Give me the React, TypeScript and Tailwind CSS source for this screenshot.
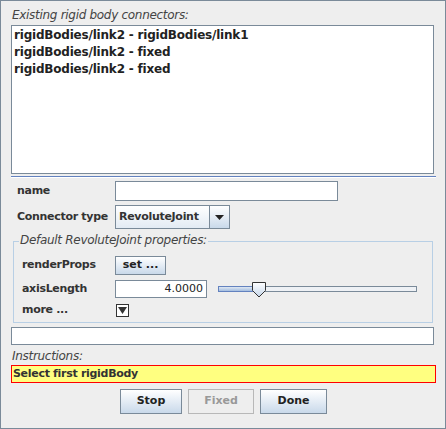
import React from "react";

const font = "font-['DejaVu_Sans','Liberation_Sans',sans-serif]";

function Field({ className = "", children }: { className?: string; children?: React.ReactNode }) {
  return (
    <div className={`bg-white border border-[#7a8a99] ${className}`}>{children}</div>
  );
}

function Button({ label, disabled, className = "" }: { label: string; disabled?: boolean; className?: string }) {
  return (
    <div
      className={`flex items-center justify-center font-bold text-[11px] border ${
        disabled
          ? "border-[#b8b8b8] bg-[#eeeeee] text-[#999999]"
          : "border-[#7a8a99] bg-gradient-to-b from-white to-[#c9d9ea] text-[#222222]"
      } ${className}`}
    >
      {label}
    </div>
  );
}

function Slider() {
  return (
    <div className="relative w-[199px] h-[17px] ml-[11px]">
      <div className="absolute left-0 top-[5px] w-[199px] h-[6px] border border-[#7a8a99] bg-[#eef1f5]" />
      <div className="absolute left-0 top-[5px] w-[40px] h-[6px] border border-[#6382bf] bg-gradient-to-b from-[#dfe8f2] to-[#a3bde0]" />
      <svg className="absolute left-[33px] top-0" width="16" height="17" viewBox="0 0 16 17">
        <defs>
          <linearGradient id="kg" x1="0" y1="0" x2="0" y2="1">
            <stop offset="0" stopColor="#ffffff" />
            <stop offset="1" stopColor="#c5d6ea" />
          </linearGradient>
        </defs>
        <path d="M1.5 1.5 H14.5 V9.5 L8 16 L1.5 9.5 Z" fill="url(#kg)" stroke="#333333" />
      </svg>
    </div>
  );
}

const label = "font-bold text-[11px] tracking-[-0.3px] whitespace-nowrap text-[#333333]";
const caption = "italic text-[#444444] tracking-[-0.3px] whitespace-nowrap";

export default function App() {
  return (
    <div className={`w-[446px] h-[429px] border border-[#7a8a99] bg-[#eeeeee] text-[12px] text-[#333333] ${font}`}>
      <div className={`pl-[11px] pt-[7px] leading-[15px] h-[24px] ${caption}`}>
        Existing rigid body connectors:
      </div>
      <Field className="ml-[10px] w-[423px] h-[149px] pt-[1px] pl-[2px]">
        {["rigidBodies/link2 - rigidBodies/link1", "rigidBodies/link2 - fixed", "rigidBodies/link2 - fixed"].map((t, i) => (
          <div key={i} className="h-[17px] leading-[17px] font-bold text-[#222222] tracking-[-0.2px]">
            {t}
          </div>
        ))}
      </Field>
      <div className="mt-[2px] ml-[10px] w-[425px] h-[1px] bg-[#6382bf]" />
      <div className="ml-[10px] w-[425px] h-[1px] bg-white" />

      <div className="flex items-center mt-[3px] h-[20px]">
        <div className={`w-[114px] pl-[16px] ${label}`}>name</div>
        <Field className="w-[223px] h-[20px]" />
      </div>

      <div className="flex items-center mt-[4px] h-[24px]">
        <div className={`w-[114px] pl-[16px] ${label}`}>Connector type</div>
        <div className="flex w-[115px] h-[24px] border border-[#7a8a99]">
          <div className={`flex-1 flex items-center pl-[3px] bg-gradient-to-b from-white to-[#e3ebf4] ${label} text-[#222222]`}>
            RevoluteJoint
          </div>
          <div className="w-[20px] border-l border-[#7a8a99] flex items-center justify-center bg-gradient-to-b from-white to-[#c9d9ea]">
            <svg width="9" height="5" viewBox="0 0 9 5">
              <path d="M0 0 H9 L4.5 5 Z" fill="#222222" />
            </svg>
          </div>
        </div>
      </div>

      <div className="relative mt-[12px] ml-[12px] w-[420px] h-[82px] border border-[#b8cfe5]">
        <div className={`absolute left-[5px] top-[-9px] px-[1px] bg-[#eeeeee] leading-[15px] ${caption}`}>
          Default RevoluteJoint properties:
        </div>
        <div className="flex items-center mt-[14px] h-[19px]">
          <div className={`w-[101px] pl-[8px] ${label}`}>renderProps</div>
          <Button label="set ..." className="w-[51px] h-[19px]" />
        </div>
        <div className="flex items-center mt-[5px] h-[18px]">
          <div className={`w-[101px] pl-[8px] ${label}`}>axisLength</div>
          <Field className="w-[92px] h-[18px] flex items-center justify-end pr-[3px] text-[11px] text-[#222222]">4.0000</Field>
          <Slider />
        </div>
        <div className="flex items-center mt-[6px] h-[13px]">
          <div className={`w-[102px] pl-[8px] ${label}`}>more ...</div>
          <div className="w-[13px] h-[13px] border border-[#333333] bg-white flex items-center justify-center">
            <svg width="9" height="7" viewBox="0 0 9 7">
              <path d="M0 0 H9 L4.5 7 Z" fill="#333333" />
            </svg>
          </div>
        </div>
      </div>

      <Field className="mt-[4px] ml-[10px] w-[423px] h-[18px]" />
      <div className={`pl-[11px] mt-[2px] h-[18px] leading-[18px] ${caption}`}>Instructions:</div>
      <div className={`ml-[10px] w-[425px] h-[18px] border border-[#ff0000] bg-[#ffff80] pl-[1px] leading-[16px] ${label} text-[#222222]`}>
        Select first rigidBody
      </div>
      <div className="flex mt-[6px] ml-[119px] gap-[6px]">
        <Button label="Stop" className="w-[62px] h-[25px]" />
        <Button label="Fixed" disabled className="w-[66px] h-[25px]" />
        <Button label="Done" className="w-[67px] h-[25px]" />
      </div>
    </div>
  );
}
